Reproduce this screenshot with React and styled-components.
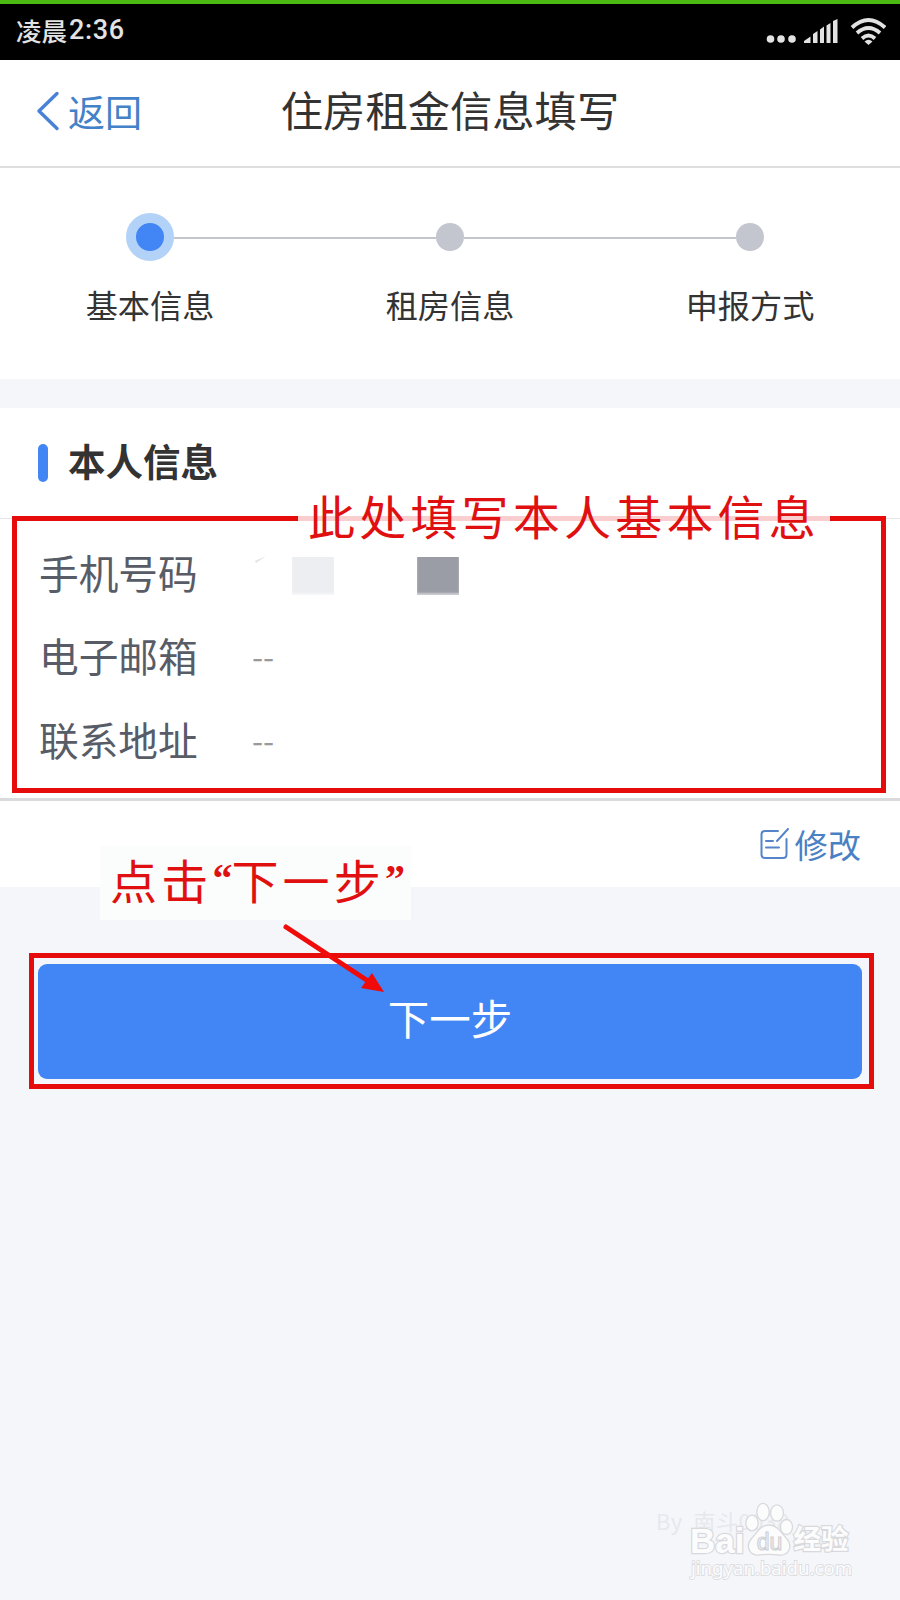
import React from "react";
import styled, { createGlobalStyle } from "styled-components";

const GlobalStyle = createGlobalStyle`
  * {
    box-sizing: border-box;
  }

  body {
    margin: 0;
    background: #f4f6fa;
    font-family: "Noto Sans CJK SC", "Noto Sans", sans-serif;
  }
`;

const steps = [
  { label: "基本信息", active: true },
  { label: "租房信息", active: false },
  { label: "申报方式", active: false },
];

const Screen = styled.div`
  position: relative;
  display: flex;
  flex-direction: column;
  width: 900px;
  height: 1600px;
  overflow: hidden;
  background: #f4f6fa;
`;

const StatusBar = styled.div`
  display: flex;
  align-items: center;
  justify-content: space-between;
  height: 60px;
  padding: 0 14px 2px 16px;
  border-top: 4px solid #4cba12;
  background: #000;
  color: #e2e2e2;
`;

const Clock = styled.div`
  display: flex;
  align-items: center;
  height: 54px;
  padding-bottom: 2px;
  font-size: 25.5px;
  font-weight: 500;
  line-height: 30px;
`;

const Digits = styled.span`
  margin-left: 2px;
  font-family: Roboto, sans-serif;
  font-size: 27px;
  font-weight: 500;
  letter-spacing: 0.6px;
`;

const NavBar = styled.div`
  display: grid;
  grid-template-columns: 200px 1fr 200px;
  align-items: center;
  height: 108px;
  padding-bottom: 8px;
  border-bottom: 2px solid #dedede;
  background: #fff;
`;

const BackButton = styled.div`
  display: flex;
  align-items: center;
  gap: 7px;
  padding: 3px 0 0 36px;
  color: #4381c8;
  font-size: 37px;
  line-height: 40px;
  white-space: nowrap;
`;

const Title = styled.div`
  color: #333;
  font-size: 42.3px;
  line-height: 50px;
  text-align: center;
  white-space: nowrap;
`;

const Stepper = styled.div`
  display: grid;
  grid-template-columns: repeat(3, 300px);
  height: 211px;
  padding-top: 45px;
  background: #fff;
`;

const Step = styled.div`
  display: flex;
  flex-direction: column;
  align-items: center;
`;

const Track = styled.div`
  display: grid;
  grid-template-columns: 1fr auto 1fr;
  align-items: center;
  width: 100%;
  height: 48px;
`;

const Line = styled.div`
  height: 2px;
  margin-top: 2px;
  background: ${(props) => (props.$hidden ? "transparent" : "#c3c5cc")};
`;

const Dot = styled.div`
  width: ${(props) => (props.$active ? 48 : 28)}px;
  height: ${(props) => (props.$active ? 48 : 28)}px;
  border: ${(props) => (props.$active ? "10px solid #b2d2f8" : "none")};
  border-radius: 50%;
  background: ${(props) => (props.$active ? "#4285f4" : "#c3c5cf")};
`;

const StepLabel = styled.div`
  margin-top: 23px;
  color: #333;
  font-size: 32.2px;
  line-height: 40px;
`;

const Section = styled.div`
  margin-top: 29px;
  background: #fff;
`;

const SectionHeader = styled.div`
  display: flex;
  align-items: center;
  height: 111px;
  padding: 0 0 4px 38px;
  border-bottom: 1px solid #e6e6ea;
`;

const Marker = styled.div`
  width: 10px;
  height: 38px;
  margin: 4px 20px 0 0;
  border-radius: 5px;
  background: #4285f4;
`;

const SectionTitle = styled.div`
  padding-bottom: 2px;
  color: #333;
  font-size: 37.5px;
  font-weight: 700;
  line-height: 44px;
`;

const Fields = styled.div`
  display: flex;
  flex-direction: column;
  height: 282px;
  padding: 11px 0 0 39px;
  border-bottom: 3px solid #dadadc;
`;

const Field = styled.div`
  display: flex;
  align-items: center;
  height: 83.5px;
`;

const FieldLabel = styled.div`
  width: 213px;
  color: #585c67;
  font-size: 39.7px;
  line-height: 44px;
`;

const FieldValue = styled.div`
  display: flex;
  align-items: center;
  color: #999;
  font-size: 32px;
  line-height: 40px;
`;

const Mask = styled.div`
  width: 42px;
  height: 38px;
  margin: 8px ${(props) => props.$gap || 0}px 0 0;
  background: ${(props) => props.$color};
  box-shadow: inset 0 -2px 2px rgba(255, 255, 255, 0.5);
`;

const Actions = styled.div`
  display: flex;
  align-items: center;
  justify-content: flex-end;
  gap: 5px;
  height: 86px;
  padding-right: 39px;
  color: #4a80c4;
  font-size: 33.3px;
  line-height: 40px;
`;

const NextButton = styled.button`
  display: flex;
  align-items: center;
  justify-content: center;
  width: 824px;
  height: 115px;
  margin: 77px auto 0 38px;
  padding: 0 0 10px;
  border: 0;
  border-radius: 9px;
  background: #4285f4;
  color: #fff;
  font-family: inherit;
  font-size: 41.5px;
  line-height: 50px;
`;

/* Red notes drawn over the page */
const Outline = styled.div`
  position: absolute;
  left: ${(props) => props.$x}px;
  top: ${(props) => props.$y}px;
  width: ${(props) => props.$w}px;
  height: ${(props) => props.$h}px;
  border: 5px solid #e60c0c;
  box-shadow: ${(props) => (props.$glow ? "inset 0 0 0 4px #f3f6fc" : "none")};
`;

const Note = styled.div`
  position: absolute;
  left: ${(props) => props.$x}px;
  top: ${(props) => props.$y}px;
  display: flex;
  align-items: center;
  width: ${(props) => props.$w}px;
  height: ${(props) => props.$h}px;
  padding: 0 0 9px 10px;
  background: ${(props) => props.$bg};
  color: #e01010;
  font-size: 47px;
  line-height: 56px;
  letter-spacing: 4.2px;
  white-space: nowrap;
`;

const Quote = styled.span`
  width: 19px;
  font-family: "Liberation Serif", serif;
  font-size: 40px;
  font-weight: 700;
  letter-spacing: 0;
`;

const Arrow = styled.svg`
  position: absolute;
  left: 276px;
  top: 918px;
`;

const Watermark = styled.div`
  position: absolute;
  left: 655px;
  top: 1500px;
  width: 200px;
  height: 85px;
`;

const Author = styled.div`
  position: absolute;
  left: 1px;
  top: 5px;
  color: #e6e8ec;
  font-size: 22px;
  line-height: 30px;
  letter-spacing: 0.6px;
  word-spacing: 5px;
  white-space: nowrap;
`;

const Brand = styled.div`
  position: absolute;
  left: 35px;
  top: 21px;
  display: flex;
  align-items: center;
  height: 40px;
  color: #fcfcfd;
  font-family: "Liberation Sans", "Noto Sans CJK SC", sans-serif;
  font-size: 35px;
  font-weight: 700;
  -webkit-text-stroke: 2.4px #d8d9dc;
  paint-order: stroke fill;
`;

const BrandName = styled.span`
  margin-left: 49px;
  font-size: 27.5px;
  line-height: 36px;
  padding-bottom: 2px;
`;

const Paw = styled.svg`
  position: absolute;
  left: 88px;
  top: 0;
`;

const Site = styled.div`
  position: absolute;
  left: 36px;
  top: 54px;
  color: #fcfcfd;
  font-family: "Noto Sans", sans-serif;
  font-size: 18.6px;
  line-height: 28px;
  -webkit-text-stroke: 1.8px #dcdde1;
  paint-order: stroke fill;
`;

const StatusIcons = () => (
  <svg width="122" height="28" viewBox="764 16 122 28" fill="#e2e2e2">
    <circle cx="770.5" cy="38" r="3.8" />
    <circle cx="781" cy="38" r="3.8" />
    <circle cx="792" cy="38" r="3.8" />
    <path d="M804 42v-2l6.500-4.500v6.500zM813 42V33l4.500-3v12zM820 42V28.500l4-3v16.500zM826.500 42V24.500l4-2.500v20zM833 42V20l4.500-2v24z" />
    <g fill="none" stroke="#e2e2e2" strokeWidth="3.800">
      <path d="M852 26.500q16.500-15 33 0M857 32q11.500-10 23 0M862 37.500q6.500-6 13 0" />
    </g>
    <path d="M864.500 40.500q4-3.500 8 0l-4 3.500z" />
  </svg>
);

const BackIcon = () => (
  <svg width="25" height="40" viewBox="0 0 25 40">
    <path
      d="M21 2.500L3 20l18 17.500"
      fill="none"
      stroke="#4881d8"
      strokeWidth="3.400"
      strokeLinecap="round"
      strokeLinejoin="round"
    />
  </svg>
);

const EditIcon = () => (
  <svg width="29" height="32" viewBox="0 0 29 32">
    <path
      d="M18 3H5Q1.500 3 1.500 6.500v20Q1.500 30 5 30h18q3.500 0 3.500-3.500V11M28 1L17 13M6 13h7M6 19.500h13"
      fill="none"
      stroke="#5585c8"
      strokeWidth="2"
      strokeLinecap="round"
    />
  </svg>
);

const App = () => {
  return (
    <>
      <GlobalStyle />
      <Screen>
        <StatusBar>
          <Clock>
            凌晨<Digits>2:36</Digits>
          </Clock>
          <StatusIcons />
        </StatusBar>

        <NavBar>
          <BackButton>
            <BackIcon />
            返回
          </BackButton>
          <Title>住房租金信息填写</Title>
        </NavBar>

        <Stepper>
          {steps.map((step, index) => (
            <Step key={step.label}>
              <Track>
                <Line $hidden={index === 0} />
                <Dot $active={step.active} />
                <Line $hidden={index === steps.length - 1} />
              </Track>
              <StepLabel>{step.label}</StepLabel>
            </Step>
          ))}
        </Stepper>

        <Section>
          <SectionHeader>
            <Marker />
            <SectionTitle>本人信息</SectionTitle>
          </SectionHeader>
          <Fields>
            <Field>
              <FieldLabel>手机号码</FieldLabel>
              <FieldValue>
                <svg width="40" height="34" viewBox="0 0 40 34">
                  <path d="M3 6l11-5-10 7z" fill="#e2e2e2" />
                </svg>
                <Mask $color="#edeef1" $gap={83} />
                <Mask $color="#9a9da6" />
              </FieldValue>
            </Field>
            <Field>
              <FieldLabel>电子邮箱</FieldLabel>
              <FieldValue>--</FieldValue>
            </Field>
            <Field>
              <FieldLabel>联系地址</FieldLabel>
              <FieldValue>--</FieldValue>
            </Field>
          </Fields>
          <Actions>
            <EditIcon />
            修改
          </Actions>
        </Section>

        <NextButton>下一步</NextButton>

        <Outline $x={12} $y={516} $w={874} $h={277} />
        <Note $x={298} $y={482} $w={532} $h={74} $bg="rgba(255, 255, 255, 0.8)">
          此处填写本人基本信息
        </Note>

        <Note $x={100} $y={846} $w={311} $h={74} $bg="#fbfdfc">
          点击<Quote>“</Quote>下一步<Quote>”</Quote>
        </Note>
        <Outline $x={29} $y={953} $w={845} $h={136} $glow />
        <Arrow width="112" height="78" viewBox="276 918 112 78">
          <path d="M286 927L368 981" stroke="#f00a0a" strokeWidth="5" strokeLinecap="round" />
          <path d="M372 973l12 19-23-4z" fill="#f00a0a" />
        </Arrow>

        <Watermark>
          <Author>By 南斗0038</Author>
          <Brand>
            Bai<BrandName>经验</BrandName>
          </Brand>
          <Paw width="56" height="58" viewBox="0 0 56 58">
            <g fill="#fcfcfd" stroke="#d8d9dc" strokeWidth="1.300">
              <ellipse cx="9" cy="23" rx="6.200" ry="7.800" />
              <ellipse cx="20" cy="12" rx="6.200" ry="8.700" />
              <ellipse cx="34" cy="13" rx="6.400" ry="8.200" />
              <ellipse cx="43.500" cy="27" rx="6" ry="7.500" />
              <path d="M26 25C17 25 14 33 9 38c-7 7-3 18 7 17 7-1 13-1 20 0 10 1 14-9 8-16C38 33 35 25 26 25z" />
            </g>
            <text
              x="26.500"
              y="50"
              textAnchor="middle"
              fontFamily="Liberation Sans"
              fontSize="23"
              fill="#fcfcfd"
              stroke="#d0d1d5"
              strokeWidth="1.200"
            >
              du
            </text>
          </Paw>
          <Site>jingyan.baidu.com</Site>
        </Watermark>
      </Screen>
    </>
  );
};

export default App;
